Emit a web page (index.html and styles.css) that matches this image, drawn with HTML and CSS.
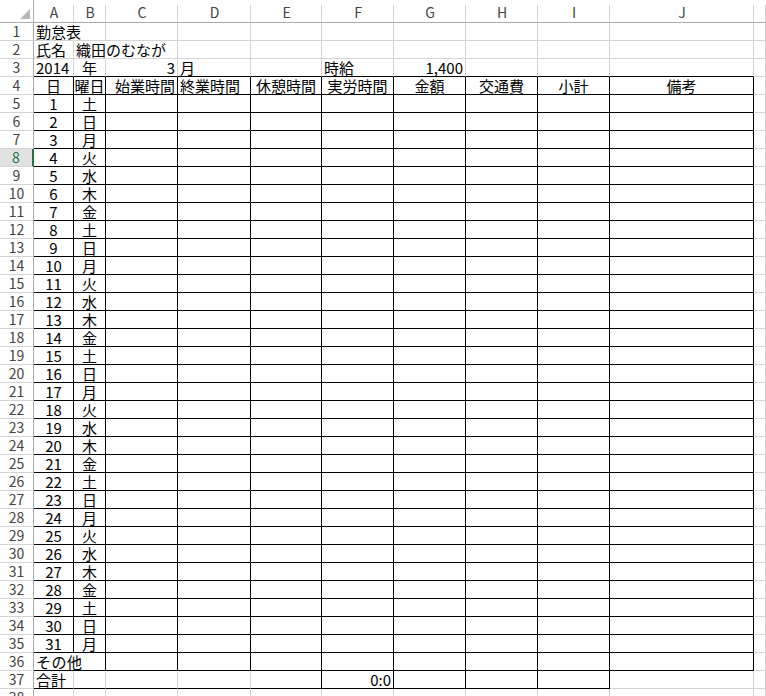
FILE: index.html
```html
<!DOCTYPE html>
<html lang="ja">
<head>
<meta charset="utf-8">
<title>勤怠表</title>
<link rel="stylesheet" href="styles.css">
</head>
<body>
<div class="sheet">
  <div class="colhead">
    <div class="corner"><svg width="10" height="10" viewBox="0 0 10 10"><polygon points="10,0 10,10 0,10" fill="#b8b8b8"/></svg></div>
    <div class="ch">A</div><div class="ch">B</div><div class="ch">C</div><div class="ch">D</div><div class="ch">E</div><div class="ch">F</div><div class="ch">G</div><div class="ch">H</div><div class="ch">I</div><div class="ch">J</div><div class="ch"></div>
  </div>

  <div class="row"><div class="rh">1</div><div class="c nr">勤怠表</div><div class="c"></div><div class="c"></div><div class="c"></div><div class="c"></div><div class="c"></div><div class="c"></div><div class="c"></div><div class="c"></div><div class="c"></div><div class="c"></div></div>
  <div class="row"><div class="rh">2</div><div class="c">氏名</div><div class="c nr">織田のむなが</div><div class="c"></div><div class="c"></div><div class="c"></div><div class="c"></div><div class="c"></div><div class="c"></div><div class="c"></div><div class="c"></div><div class="c"></div></div>
  <div class="row"><div class="rh">3</div><div class="c bt">2014</div><div class="c bt ctr">年</div><div class="c bt r">3</div><div class="c bt">月</div><div class="c bt"></div><div class="c bt">時給</div><div class="c bt r">1,400</div><div class="c bt"></div><div class="c bt"></div><div class="c bt"></div><div class="c"></div></div>
  <div class="row"><div class="rh">4</div><div class="c t ctr">日</div><div class="c t ctr">曜日</div><div class="c t r">始業時間</div><div class="c t">終業時間</div><div class="c t ctr">休憩時間</div><div class="c t ctr">実労時間</div><div class="c t ctr">金額</div><div class="c t ctr">交通費</div><div class="c t ctr">小計</div><div class="c t ctr">備考</div><div class="c"></div></div>

  <div class="row"><div class="rh">5</div><div class="c t ctr">1</div><div class="c t ctr">土</div><div class="c t"></div><div class="c t"></div><div class="c t"></div><div class="c t"></div><div class="c t"></div><div class="c t"></div><div class="c t"></div><div class="c t"></div><div class="c"></div></div>
  <div class="row"><div class="rh">6</div><div class="c t ctr">2</div><div class="c t ctr">日</div><div class="c t"></div><div class="c t"></div><div class="c t"></div><div class="c t"></div><div class="c t"></div><div class="c t"></div><div class="c t"></div><div class="c t"></div><div class="c"></div></div>
  <div class="row"><div class="rh">7</div><div class="c t ctr">3</div><div class="c t ctr">月</div><div class="c t"></div><div class="c t"></div><div class="c t"></div><div class="c t"></div><div class="c t"></div><div class="c t"></div><div class="c t"></div><div class="c t"></div><div class="c"></div></div>
  <div class="row"><div class="rh sel">8</div><div class="c t ctr">4</div><div class="c t ctr">火</div><div class="c t"></div><div class="c t"></div><div class="c t"></div><div class="c t"></div><div class="c t"></div><div class="c t"></div><div class="c t"></div><div class="c t"></div><div class="c"></div></div>
  <div class="row"><div class="rh">9</div><div class="c t ctr">5</div><div class="c t ctr">水</div><div class="c t"></div><div class="c t"></div><div class="c t"></div><div class="c t"></div><div class="c t"></div><div class="c t"></div><div class="c t"></div><div class="c t"></div><div class="c"></div></div>
  <div class="row"><div class="rh">10</div><div class="c t ctr">6</div><div class="c t ctr">木</div><div class="c t"></div><div class="c t"></div><div class="c t"></div><div class="c t"></div><div class="c t"></div><div class="c t"></div><div class="c t"></div><div class="c t"></div><div class="c"></div></div>
  <div class="row"><div class="rh">11</div><div class="c t ctr">7</div><div class="c t ctr">金</div><div class="c t"></div><div class="c t"></div><div class="c t"></div><div class="c t"></div><div class="c t"></div><div class="c t"></div><div class="c t"></div><div class="c t"></div><div class="c"></div></div>
  <div class="row"><div class="rh">12</div><div class="c t ctr">8</div><div class="c t ctr">土</div><div class="c t"></div><div class="c t"></div><div class="c t"></div><div class="c t"></div><div class="c t"></div><div class="c t"></div><div class="c t"></div><div class="c t"></div><div class="c"></div></div>
  <div class="row"><div class="rh">13</div><div class="c t ctr">9</div><div class="c t ctr">日</div><div class="c t"></div><div class="c t"></div><div class="c t"></div><div class="c t"></div><div class="c t"></div><div class="c t"></div><div class="c t"></div><div class="c t"></div><div class="c"></div></div>
  <div class="row"><div class="rh">14</div><div class="c t ctr">10</div><div class="c t ctr">月</div><div class="c t"></div><div class="c t"></div><div class="c t"></div><div class="c t"></div><div class="c t"></div><div class="c t"></div><div class="c t"></div><div class="c t"></div><div class="c"></div></div>
  <div class="row"><div class="rh">15</div><div class="c t ctr">11</div><div class="c t ctr">火</div><div class="c t"></div><div class="c t"></div><div class="c t"></div><div class="c t"></div><div class="c t"></div><div class="c t"></div><div class="c t"></div><div class="c t"></div><div class="c"></div></div>
  <div class="row"><div class="rh">16</div><div class="c t ctr">12</div><div class="c t ctr">水</div><div class="c t"></div><div class="c t"></div><div class="c t"></div><div class="c t"></div><div class="c t"></div><div class="c t"></div><div class="c t"></div><div class="c t"></div><div class="c"></div></div>
  <div class="row"><div class="rh">17</div><div class="c t ctr">13</div><div class="c t ctr">木</div><div class="c t"></div><div class="c t"></div><div class="c t"></div><div class="c t"></div><div class="c t"></div><div class="c t"></div><div class="c t"></div><div class="c t"></div><div class="c"></div></div>
  <div class="row"><div class="rh">18</div><div class="c t ctr">14</div><div class="c t ctr">金</div><div class="c t"></div><div class="c t"></div><div class="c t"></div><div class="c t"></div><div class="c t"></div><div class="c t"></div><div class="c t"></div><div class="c t"></div><div class="c"></div></div>
  <div class="row"><div class="rh">19</div><div class="c t ctr">15</div><div class="c t ctr">土</div><div class="c t"></div><div class="c t"></div><div class="c t"></div><div class="c t"></div><div class="c t"></div><div class="c t"></div><div class="c t"></div><div class="c t"></div><div class="c"></div></div>
  <div class="row"><div class="rh">20</div><div class="c t ctr">16</div><div class="c t ctr">日</div><div class="c t"></div><div class="c t"></div><div class="c t"></div><div class="c t"></div><div class="c t"></div><div class="c t"></div><div class="c t"></div><div class="c t"></div><div class="c"></div></div>
  <div class="row"><div class="rh">21</div><div class="c t ctr">17</div><div class="c t ctr">月</div><div class="c t"></div><div class="c t"></div><div class="c t"></div><div class="c t"></div><div class="c t"></div><div class="c t"></div><div class="c t"></div><div class="c t"></div><div class="c"></div></div>
  <div class="row"><div class="rh">22</div><div class="c t ctr">18</div><div class="c t ctr">火</div><div class="c t"></div><div class="c t"></div><div class="c t"></div><div class="c t"></div><div class="c t"></div><div class="c t"></div><div class="c t"></div><div class="c t"></div><div class="c"></div></div>
  <div class="row"><div class="rh">23</div><div class="c t ctr">19</div><div class="c t ctr">水</div><div class="c t"></div><div class="c t"></div><div class="c t"></div><div class="c t"></div><div class="c t"></div><div class="c t"></div><div class="c t"></div><div class="c t"></div><div class="c"></div></div>
  <div class="row"><div class="rh">24</div><div class="c t ctr">20</div><div class="c t ctr">木</div><div class="c t"></div><div class="c t"></div><div class="c t"></div><div class="c t"></div><div class="c t"></div><div class="c t"></div><div class="c t"></div><div class="c t"></div><div class="c"></div></div>
  <div class="row"><div class="rh">25</div><div class="c t ctr">21</div><div class="c t ctr">金</div><div class="c t"></div><div class="c t"></div><div class="c t"></div><div class="c t"></div><div class="c t"></div><div class="c t"></div><div class="c t"></div><div class="c t"></div><div class="c"></div></div>
  <div class="row"><div class="rh">26</div><div class="c t ctr">22</div><div class="c t ctr">土</div><div class="c t"></div><div class="c t"></div><div class="c t"></div><div class="c t"></div><div class="c t"></div><div class="c t"></div><div class="c t"></div><div class="c t"></div><div class="c"></div></div>
  <div class="row"><div class="rh">27</div><div class="c t ctr">23</div><div class="c t ctr">日</div><div class="c t"></div><div class="c t"></div><div class="c t"></div><div class="c t"></div><div class="c t"></div><div class="c t"></div><div class="c t"></div><div class="c t"></div><div class="c"></div></div>
  <div class="row"><div class="rh">28</div><div class="c t ctr">24</div><div class="c t ctr">月</div><div class="c t"></div><div class="c t"></div><div class="c t"></div><div class="c t"></div><div class="c t"></div><div class="c t"></div><div class="c t"></div><div class="c t"></div><div class="c"></div></div>
  <div class="row"><div class="rh">29</div><div class="c t ctr">25</div><div class="c t ctr">火</div><div class="c t"></div><div class="c t"></div><div class="c t"></div><div class="c t"></div><div class="c t"></div><div class="c t"></div><div class="c t"></div><div class="c t"></div><div class="c"></div></div>
  <div class="row"><div class="rh">30</div><div class="c t ctr">26</div><div class="c t ctr">水</div><div class="c t"></div><div class="c t"></div><div class="c t"></div><div class="c t"></div><div class="c t"></div><div class="c t"></div><div class="c t"></div><div class="c t"></div><div class="c"></div></div>
  <div class="row"><div class="rh">31</div><div class="c t ctr">27</div><div class="c t ctr">木</div><div class="c t"></div><div class="c t"></div><div class="c t"></div><div class="c t"></div><div class="c t"></div><div class="c t"></div><div class="c t"></div><div class="c t"></div><div class="c"></div></div>
  <div class="row"><div class="rh">32</div><div class="c t ctr">28</div><div class="c t ctr">金</div><div class="c t"></div><div class="c t"></div><div class="c t"></div><div class="c t"></div><div class="c t"></div><div class="c t"></div><div class="c t"></div><div class="c t"></div><div class="c"></div></div>
  <div class="row"><div class="rh">33</div><div class="c t ctr">29</div><div class="c t ctr">土</div><div class="c t"></div><div class="c t"></div><div class="c t"></div><div class="c t"></div><div class="c t"></div><div class="c t"></div><div class="c t"></div><div class="c t"></div><div class="c"></div></div>
  <div class="row"><div class="rh">34</div><div class="c t ctr">30</div><div class="c t ctr">日</div><div class="c t"></div><div class="c t"></div><div class="c t"></div><div class="c t"></div><div class="c t"></div><div class="c t"></div><div class="c t"></div><div class="c t"></div><div class="c"></div></div>
  <div class="row"><div class="rh">35</div><div class="c t ctr">31</div><div class="c t ctr">月</div><div class="c t"></div><div class="c t"></div><div class="c t"></div><div class="c t"></div><div class="c t"></div><div class="c t"></div><div class="c t"></div><div class="c t"></div><div class="c"></div></div>

  <div class="row"><div class="rh">36</div><div class="c t span2 wide">その他</div><div class="c t"></div><div class="c t"></div><div class="c t"></div><div class="c t"></div><div class="c t"></div><div class="c t"></div><div class="c t"></div><div class="c t"></div><div class="c"></div></div>
  <div class="row"><div class="rh">37</div><div class="c tb">合計</div><div class="c tb"></div><div class="c tb"></div><div class="c tb"></div><div class="c t"></div><div class="c t r">0:0</div><div class="c t"></div><div class="c t"></div><div class="c t"></div><div class="c"></div><div class="c"></div></div>
  <div class="row"><div class="rh">38</div><div class="c"></div><div class="c"></div><div class="c"></div><div class="c"></div><div class="c"></div><div class="c"></div><div class="c"></div><div class="c"></div><div class="c"></div><div class="c"></div><div class="c"></div></div>
</div>
</body>
</html>
```

FILE: styles.css
```css
* {
  box-sizing: border-box;
}

html,
body {
  margin: 0;
  padding: 0;
}

body {
  width: 766px;
  height: 696px;
  overflow: hidden;
  background: #ffffff;
  font-family: "Noto Sans CJK JP", sans-serif;
  font-size: 15px;
  color: #000000;
}

.colhead,
.row {
  display: grid;
  grid-template-columns: 34px 40px 32px 72px 73px 71px 72px 72px 72px 72px 144px 1fr;
}

.colhead {
  height: 23px;
}

.row {
  height: 18px;
}

.corner {
  border-right: 1px solid #ababab;
  border-bottom: 1px solid #ababab;
  display: flex;
  justify-content: flex-end;
  align-items: flex-end;
  padding: 0 3px 3px 0;
}

.corner svg {
  display: block;
}

.ch {
  border-bottom: 1px solid #ababab;
  background-image: linear-gradient(#d4d4d4, #d4d4d4);
  background-size: 1px calc(100% - 5px);
  background-position: right bottom;
  background-repeat: no-repeat;
  display: flex;
  justify-content: center;
  align-items: center;
  padding-top: 1px;
  font-size: 14px;
  color: #444444;
  line-height: 20px;
}

.rh {
  border-right: 1px solid #ababab;
  border-bottom: 1px solid #d4d4d4;
  display: flex;
  justify-content: center;
  align-items: center;
  font-size: 14px;
  color: #444444;
  line-height: 17px;
}

.rh.sel {
  background: #e1e1e1;
  color: #217346;
  border-right: 2px solid #217346;
}

.c {
  border-right: 1px solid #d4d4d4;
  border-bottom: 1px solid #d4d4d4;
  display: flex;
  align-items: flex-end;
  padding: 0 2px;
  line-height: 17px;
  white-space: nowrap;
  min-width: 0;
}

.c.ctr {
  justify-content: center;
}

.c.r {
  justify-content: flex-end;
}

.c.nr {
  border-right-color: transparent;
}

.c.bt {
  border-bottom-color: #000000;
}

.c.t {
  border-right-color: #000000;
  border-bottom-color: #000000;
}

.c.tb {
  border-bottom-color: #000000;
}

.c.span2 {
  grid-column: span 2;
}

.c.wide {
  letter-spacing: 0.5px;
}
```
